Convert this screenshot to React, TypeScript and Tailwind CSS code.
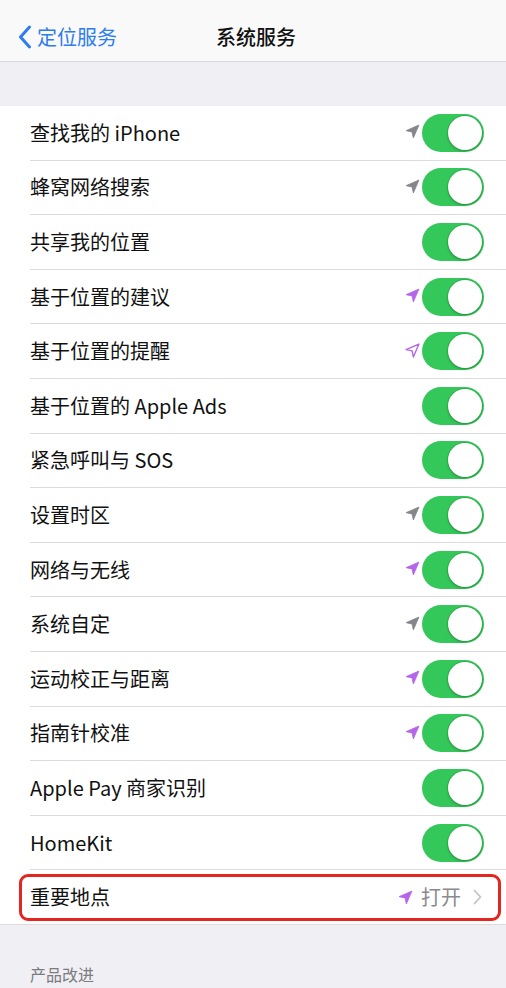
import React from "react";

type Arrow = "gray" | "purple" | "outline" | null;

const rows: { label: string; arrow: Arrow }[] = [
  { label: "查找我的 iPhone", arrow: "gray" },
  { label: "蜂窝网络搜索", arrow: "gray" },
  { label: "共享我的位置", arrow: null },
  { label: "基于位置的建议", arrow: "purple" },
  { label: "基于位置的提醒", arrow: "outline" },
  { label: "基于位置的 Apple Ads", arrow: null },
  { label: "紧急呼叫与 SOS", arrow: null },
  { label: "设置时区", arrow: "gray" },
  { label: "网络与无线", arrow: "purple" },
  { label: "系统自定", arrow: "gray" },
  { label: "运动校正与距离", arrow: "purple" },
  { label: "指南针校准", arrow: "purple" },
  { label: "Apple Pay 商家识别", arrow: null },
  { label: "HomeKit", arrow: null },
];

function LocationArrow({ kind }: { kind: Exclude<Arrow, null> }) {
  const color = kind === "gray" ? "#85858a" : "#b565ea";
  return (
    <svg width="15" height="15" viewBox="0 0 14 14" className="shrink-0">
      <path
        d="M13 1 L1 6.2 L6.6 7.4 L7.8 13 Z"
        fill={kind === "outline" ? "none" : color}
        stroke={color}
        strokeWidth={kind === "outline" ? 1.3 : 0.8}
        strokeLinejoin="round"
      />
    </svg>
  );
}

function Toggle() {
  return (
    <div className="flex h-[38px] w-[62px] shrink-0 items-center justify-end rounded-full bg-[#34c759] p-[2px]">
      <div className="size-[34px] rounded-full bg-white shadow-[0_0_0_1px_rgba(0,0,0,0.1),0_2px_3px_rgba(0,0,0,0.15)]" />
    </div>
  );
}

export default function App() {
  return (
    <div
      className="flex h-[988px] w-[506px] flex-col overflow-hidden bg-[#efeff4] text-[#111]"
      style={{ fontFamily: '"Noto Sans CJK SC", "Noto Sans", sans-serif' }}
    >
      {/* nav bar */}
      <div className="relative flex h-[62px] shrink-0 items-center border-b border-[#d8d8dc] bg-[#f9f9fa] pt-[12px]">
        <div className="flex items-center pl-[18px] text-[20px] text-[#2d7cf0]">
          <svg width="14" height="24" viewBox="0 0 14 24" className="mr-[5px]">
            <path d="M11.5 2 L2.5 12 L11.5 22" fill="none" stroke="#2d7cf0" strokeWidth="3" strokeLinecap="round" strokeLinejoin="round" />
          </svg>
          定位服务
        </div>
        <div className="absolute left-[216px] text-[20px] font-medium">系统服务</div>
      </div>

      <div className="h-[44px] shrink-0" />

      {/* list */}
      <div className="flex flex-col bg-white">
        {rows.map((r) => (
          <div key={r.label} className="flex h-[54.6px] items-center pl-[30px]">
            <div className="flex h-full flex-1 items-center border-b border-[#dcdce0] pr-[22px]">
              <span className="flex-1 text-[20px]">{r.label}</span>
              {r.arrow && (
                <span className="mr-[2px] mt-[-2px]">
                  <LocationArrow kind={r.arrow} />
                </span>
              )}
              <Toggle />
            </div>
          </div>
        ))}
        <div className="flex h-[54.6px] items-center border-b border-[#dcdce0] pl-[19px] pr-[5px]">
          <div className="flex h-[47px] flex-1 items-center rounded-[9px] border-[3px] border-[#e5251f] pl-[8px] pr-[16px]">
            <span className="flex-1 text-[20px]">重要地点</span>
            <span className="mr-[8px]">
              <LocationArrow kind="purple" />
            </span>
            <span className="text-[20px] text-[#8a8a8e]">打开</span>
            <svg width="9" height="16" viewBox="0 0 9 16" className="ml-[12px]">
              <path d="M1.5 1.5 L7.5 8 L1.5 14.5" fill="none" stroke="#c4c4c8" strokeWidth="1.8" strokeLinecap="round" strokeLinejoin="round" />
            </svg>
          </div>
        </div>
      </div>

      <div className="px-[30px] pt-[37px] text-[16px] text-[#7b7b80]">产品改进</div>
    </div>
  );
}
